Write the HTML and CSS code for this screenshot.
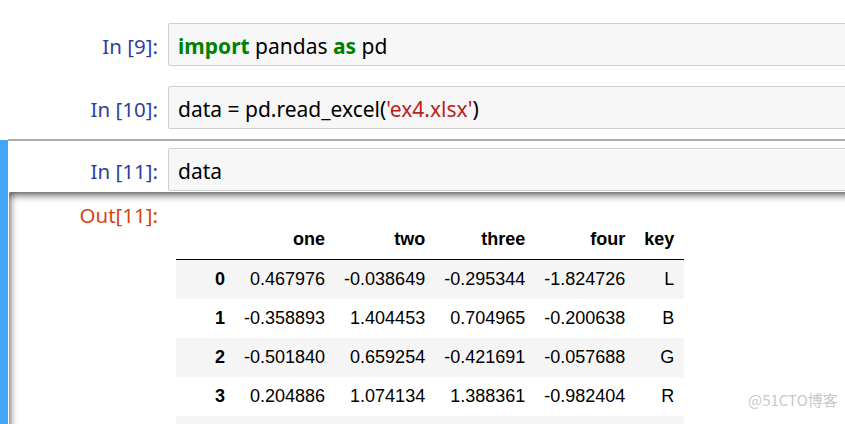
FILE: index.html
```html
<!DOCTYPE html>
<html lang="en">
<head>
<meta charset="utf-8">
<title>Notebook</title>
<link rel="stylesheet" href="styles.css">
</head>
<body>
<div class="notebook">
  <div class="cell">
    <div class="input">
      <div class="prompt in-prompt">In&nbsp;[9]:</div>
      <div class="code"><span class="kw">import</span> pandas <span class="kw">as</span> pd</div>
    </div>
  </div>
  <div class="cell">
    <div class="input">
      <div class="prompt in-prompt">In&nbsp;[10]:</div>
      <div class="code">data = pd.read_excel(<span class="str">'ex4.xlsx'</span>)</div>
    </div>
  </div>
  <div class="cell selected">
    <div class="input">
      <div class="prompt in-prompt">In&nbsp;[11]:</div>
      <div class="code">data</div>
    </div>
    <div class="output">
      <div class="prompt out-prompt">Out[11]:</div>
      <div class="output-sub">
        <table class="df">
          <thead>
            <tr><th class="idx"></th><th>one</th><th>two</th><th>three</th><th>four</th><th>key</th></tr>
          </thead>
          <tbody>
            <tr><th class="idx">0</th><td>0.467976</td><td>-0.038649</td><td>-0.295344</td><td>-1.824726</td><td>L</td></tr>
            <tr><th class="idx">1</th><td>-0.358893</td><td>1.404453</td><td>0.704965</td><td>-0.200638</td><td>B</td></tr>
            <tr><th class="idx">2</th><td>-0.501840</td><td>0.659254</td><td>-0.421691</td><td>-0.057688</td><td>G</td></tr>
            <tr><th class="idx">3</th><td>0.204886</td><td>1.074134</td><td>1.388361</td><td>-0.982404</td><td>R</td></tr>
            <tr class="partial"><th class="idx"></th><td></td><td></td><td></td><td></td><td></td></tr>
          </tbody>
        </table>
      </div>
    </div>
  </div>
</div>
<div class="watermark">@51CTO博客</div>
</body>
</html>
```
FILE: styles.css
```css
html, body {
  margin: 0;
  padding: 0;
  background: #ffffff;
  overflow: hidden;
  width: 845px;
  height: 424px;
}

.notebook {
  width: 1000px;
  padding-top: 13px;
  font-family: "Noto Sans", "Open Sans", sans-serif;
  font-size: 21px;
  color: #000000;
}

.cell {
  position: relative;
  margin-left: 8px;
  padding: 9px 0 9px 1px;
  border-top: 1px solid transparent;
  border-bottom: 1px solid transparent;
}

.cell.selected {
  border-top: 2px solid #ababab;
  padding-top: 7px;
}

.cell.selected::before {
  content: "";
  position: absolute;
  left: -8px;
  top: -1px;
  width: 8px;
  height: 400px;
  background: #42a5f5;
}

.input {
  display: flex;
  align-items: flex-start;
}

.prompt {
  flex: 0 0 159px;
  box-sizing: border-box;
  text-align: right;
  padding: 11px 10px 0 0;
  line-height: 25px;
  font-size: 20.5px;
  white-space: nowrap;
}

.in-prompt {
  color: #303f9f;
}

.out-prompt {
  color: #d84315;
}

.code {
  flex: 1;
  height: 43px;
  box-sizing: border-box;
  border: 1px solid #cfcfcf;
  border-radius: 2px;
  background: #f7f7f7;
  padding: 10px 9px 0 9px;
  line-height: 25px;
  white-space: pre;
}

.kw {
  color: #008000;
  font-weight: bold;
}

.str {
  color: #ba2121;
}

.output {
  display: flex;
  align-items: flex-start;
  margin-top: 1px;
  min-height: 320px;
  border-radius: 2px;
  box-shadow: inset 0 2px 8px rgba(0, 0, 0, 0.8);
}

.output-sub {
  padding: 28px 0 0 8px;
}

.df {
  border-collapse: collapse;
  border-spacing: 0;
  font-family: "Liberation Sans", Arial, sans-serif;
  font-size: 18px;
  color: #000000;
}

.df th,
.df td {
  padding: 9px 10px 9px 9px;
  line-height: normal;
  text-align: right;
  white-space: nowrap;
}

.df th {
  font-weight: bold;
}

.df thead {
  border-bottom: 1px solid #000000;
}

.df th.idx {
  width: 40px;
}

.df tr.partial th,
.df tr.partial td {
  height: 21px;
}

.df tbody tr:nth-child(odd) {
  background: #f5f5f5;
}

.watermark {
  position: absolute;
  left: 748px;
  top: 390px;
  font-family: "Noto Sans CJK SC", "Noto Sans", sans-serif;
  font-size: 15px;
  line-height: 20px;
  color: #c8c8c8;
}
```
